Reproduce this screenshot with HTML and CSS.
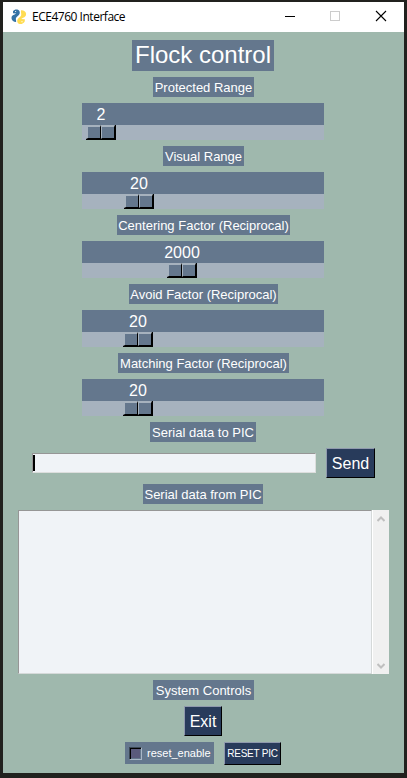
FILE: index.html
```html
<!DOCTYPE html>
<html lang="en">
<head>
<meta charset="utf-8">
<title>ECE4760 Interface</title>
<link rel="stylesheet" href="styles.css">
</head>
<body>
<div class="window">
  <header class="titlebar">
    <svg class="logo" width="16" height="16" viewBox="0 0 16 16">
      <path d="M2 2.200C3 .6 5.300 0 7 .7c1.700.8 2.100 2.500 1.600 4.100C8 6.700 5.600 7.500 5 9c-.5 1.300.3 2.400.1 3.900C3 13 .6 11.500.5 9.200.3 7 1.800 6 3.600 5.400L5.200 4.600 2 4.300Z" fill="#3573a5"/>
      <path d="M10 1.200c2.400-.3 4.900 1.100 5.100 3.500.2 2.200-1.200 3.400-3 4.100l-1.900 1.100 3.600.4v1.900c-.9 2-3 3.100-5.200 2.800-2-.3-2.700-2.300-2.300-4.100.5-2 2.900-2.700 3.700-4.200C10.700 5.200 9.600 3.400 10 1.200Z" fill="#ffdc52"/>
      <circle cx="4.600" cy="2.500" r=".6" fill="#fff"/>
      <circle cx="11" cy="12.700" r=".6" fill="#fff"/>
    </svg>
    <span class="caption">ECE4760 Interface</span>
    <svg class="controls" width="126" height="30" viewBox="0 0 126 30" fill="none" shape-rendering="crispEdges">
      <path d="M7 14.500h10" stroke="#000"/>
      <path d="M52.500 9.500h9v9h-9z" stroke="#ccc"/>
      <path d="M98 9l10 10M108 9l-10 10" stroke="#000" stroke-width="1.100" shape-rendering="auto"/>
    </svg>
  </header>
  <main class="content">
    <h1 class="label title even"><span>Flock control</span></h1>

    <div class="label w101"><span>Protected Range</span></div>
    <div class="slider"><div class="value at-2">2</div><div class="trough"><div class="thumb t-2"><i></i><i></i></div></div></div>

    <div class="label w81"><span>Visual Range</span></div>
    <div class="slider"><div class="value at-20b">20</div><div class="trough"><div class="thumb t-20b"><i></i><i></i></div></div></div>

    <div class="label w173"><span>Centering Factor (Reciprocal)</span></div>
    <div class="slider"><div class="value at-2000">2000</div><div class="trough"><div class="thumb t-2000"><i></i><i></i></div></div></div>

    <div class="label w149"><span>Avoid Factor (Reciprocal)</span></div>
    <div class="slider"><div class="value at-20">20</div><div class="trough"><div class="thumb t-20"><i></i><i></i></div></div></div>

    <div class="label w171"><span>Matching Factor (Reciprocal)</span></div>
    <div class="slider"><div class="value at-20">20</div><div class="trough"><div class="thumb t-20"><i></i><i></i></div></div></div>

    <div class="label w106 even"><span>Serial data to PIC</span></div>
    <div class="send-row">
      <div class="input"><div class="caret"></div></div>
      <div class="button send">Send</div>
    </div>

    <div class="label w120 even"><span>Serial data from PIC</span></div>
    <div class="output">
      <div class="text"></div>
      <div class="scrollbar">
        <svg width="8" height="6" viewBox="0 0 8 6"><path d="M.5 5 4 1.500 7.500 5" fill="none" stroke="#bfbfbf" stroke-width="2"/></svg>
        <svg width="8" height="6" viewBox="0 0 8 6"><path d="M.5 1 4 4.500 7.500 1" fill="none" stroke="#bfbfbf" stroke-width="2"/></svg>
      </div>
    </div>

    <div class="label w101"><span>System Controls</span></div>
    <div class="button exit even">Exit</div>
    <div class="reset-row even">
      <div class="check"><div class="box"></div><span>reset_enable</span></div>
      <div class="button reset">RESET PIC</div>
    </div>
  </main>
</div>
</body>
</html>
```
FILE: styles.css
```css
* { box-sizing: border-box; }
body {
  margin: 0;
  height: 778px;
  padding: 2px 3px 5px;
  background: #21211e;
  font-family: "Liberation Sans", Arial, sans-serif;
  color: #fff;
  overflow: hidden;
}
.window { width: 401px; height: 771px; background: #9fb8ad; }
.titlebar {
  display: flex;
  align-items: center;
  height: 30px;
  padding-left: 8px;
  background: #fff;
  color: #000;
}
.logo { margin-top: -1px; }
.caption {
  margin-left: 5px;
  font: 12px/30px "Open Sans", "Noto Sans", sans-serif;
  letter-spacing: -0.48px;
  white-space: nowrap;
}
.controls { margin-left: auto; }
.content {
  display: flex;
  flex-direction: column;
  align-items: center;
  gap: 6px;
  padding-top: 8px;
}
.even { margin-right: 1px; }
.label {
  height: 20px;
  background: #64778d;
  font-size: 13px;
  line-height: 22px;
  white-space: nowrap;
  display: flex;
  justify-content: center;
}
.title {
  margin: 0 1px 0 0;
  width: 142px;
  height: 31px;
  font-size: 24px;
  font-weight: 400;
  line-height: 29px;
}
.w81 { width: 81px; }
.w101 { width: 101px; }
.w106 { width: 106px; }
.w120 { width: 120px; }
.w149 { width: 149px; }
.w171 { width: 171px; }
.w173 { width: 173px; }
.slider { width: 242px; height: 37px; margin-right: 1px; background: #64778d; }
.value { width: 40px; height: 22px; font-size: 16px; line-height: 23px; text-align: center; }
.at-2 { margin-left: -1px; }
.at-20 { margin-left: 36px; }
.at-20b { margin-left: 37px; }
.at-2000 { margin-left: 80px; }
.trough { height: 15px; background: #a6b2be; }
.thumb { display: flex; width: 30px; height: 15px; border-right: 1px solid #000; border-bottom: 1px solid #000; }
.thumb i {
  flex: 1;
  background: #64778d;
  border: solid;
  border-width: 2px 1px 1px 2px;
  border-color: #a6b2be #000 #000 #a6b2be;
}
.thumb i + i { border-left-width: 1px; }
.t-2 { margin-left: 4px; }
.t-20 { margin-left: 41px; }
.t-20b { margin-left: 42px; }
.t-2000 { margin-left: 85px; }
.button {
  background: #283b5b;
  border: 1px solid;
  border-color: #8f99ad #000 #000 #8f99ad;
  text-align: center;
  white-space: nowrap;
}
.send-row { display: flex; align-items: center; gap: 10px; width: 343px; height: 30px; }
.input {
  width: 284px;
  height: 20px;
  background: #f0f3f7;
  border: 1px solid;
  border-color: #969696 #dcdedd #dcdedd #969696;
}
.caret { width: 2px; height: 16px; margin-top: 1px; background: #000; }
.send { width: 49px; height: 30px; font-size: 16px; line-height: 29px; }
.output { display: flex; width: 371px; height: 164px; }
.text {
  width: 354px;
  background: #f0f3f7;
  border: 1px solid;
  border-color: #969696 #d5d9d9 #d5d9d9 #969696;
}
.scrollbar {
  display: flex;
  flex-direction: column;
  align-items: center;
  justify-content: space-between;
  width: 17px;
  padding: 6px 0 5px;
  background: #f0f0f0;
  border-left: 1px solid #fff;
}
.exit { width: 38px; height: 30px; font-size: 16px; line-height: 29px; }
.reset-row { display: flex; gap: 10px; width: 156px; }
.check {
  display: flex;
  align-items: center;
  width: 89px;
  height: 22px;
  padding-left: 4px;
  background: #64778d;
  font-size: 11px;
  white-space: nowrap;
}
.box {
  width: 13px;
  height: 13px;
  margin-right: 5px;
  background: #5a5a7c;
  border: 1px solid;
  border-color: #3c4855 #a9b7c7 #a9b7c7 #3c4855;
  box-shadow: inset 1px 1px #000, inset -1px -1px #64778d;
}
.reset { width: 57px; height: 23px; font-size: 10px; line-height: 21px; letter-spacing: -0.25px; }
```
